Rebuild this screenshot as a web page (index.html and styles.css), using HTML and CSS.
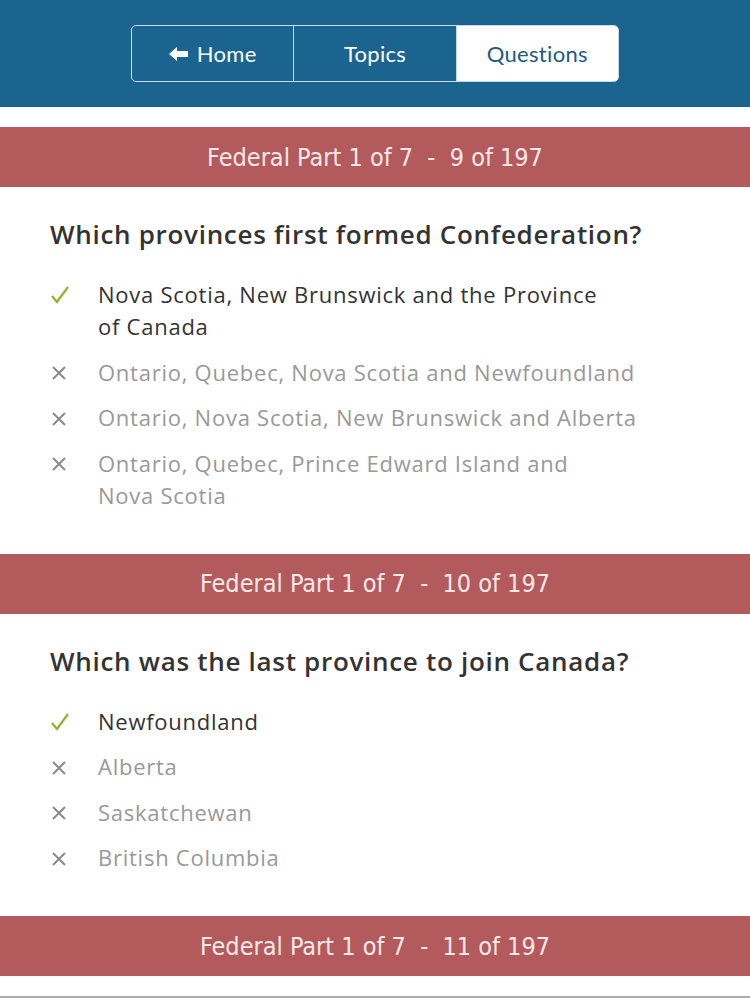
FILE: index.html
```html
<!DOCTYPE html>
<html>
<head>
<meta charset="utf-8">
<link rel="stylesheet" href="styles.css">
</head>
<body>
<header class="topbar">
  <nav class="seg">
    <a class="seg-item"><svg class="arrow" width="20" height="16" viewBox="0 0 20 16"><path d="M0 8 L8 1 L8 5 L19 5 L19 11 L8 11 L8 15 Z" fill="#fff"/></svg>Home</a>
    <a class="seg-item">Topics</a>
    <a class="seg-item active">Questions</a>
  </nav>
</header>
<main>
  <div class="bar">Federal Part 1 of 7  -  9 of 197</div>
  <section class="q">
    <h2 class="q-title">Which provinces first formed Confederation?</h2>
    <ul class="answers">
      <li class="ans right"><span class="ic"><svg width="20" height="20" viewBox="0 0 20 20"><path d="M2 11 L7 17 L18 2" fill="none" stroke="#8db42a" stroke-width="2.2"/></svg></span><span class="txt">Nova Scotia, New Brunswick and the Province<br>of Canada</span></li>
      <li class="ans"><span class="ic"><svg width="14" height="14" viewBox="0 0 14 14"><path d="M1 1 L13 13 M13 1 L1 13" stroke="#8a8a8a" stroke-width="2"/></svg></span><span class="txt">Ontario, Quebec, Nova Scotia and Newfoundland</span></li>
      <li class="ans"><span class="ic"><svg width="14" height="14" viewBox="0 0 14 14"><path d="M1 1 L13 13 M13 1 L1 13" stroke="#8a8a8a" stroke-width="2"/></svg></span><span class="txt">Ontario, Nova Scotia, New Brunswick and Alberta</span></li>
      <li class="ans"><span class="ic"><svg width="14" height="14" viewBox="0 0 14 14"><path d="M1 1 L13 13 M13 1 L1 13" stroke="#8a8a8a" stroke-width="2"/></svg></span><span class="txt">Ontario, Quebec, Prince Edward Island and<br>Nova Scotia</span></li>
    </ul>
  </section>
  <div class="bar">Federal Part 1 of 7  -  10 of 197</div>
  <section class="q">
    <h2 class="q-title">Which was the last province to join Canada?</h2>
    <ul class="answers">
      <li class="ans right"><span class="ic"><svg width="20" height="20" viewBox="0 0 20 20"><path d="M2 11 L7 17 L18 2" fill="none" stroke="#8db42a" stroke-width="2.2"/></svg></span><span class="txt">Newfoundland</span></li>
      <li class="ans"><span class="ic"><svg width="14" height="14" viewBox="0 0 14 14"><path d="M1 1 L13 13 M13 1 L1 13" stroke="#8a8a8a" stroke-width="2"/></svg></span><span class="txt">Alberta</span></li>
      <li class="ans"><span class="ic"><svg width="14" height="14" viewBox="0 0 14 14"><path d="M1 1 L13 13 M13 1 L1 13" stroke="#8a8a8a" stroke-width="2"/></svg></span><span class="txt">Saskatchewan</span></li>
      <li class="ans"><span class="ic"><svg width="14" height="14" viewBox="0 0 14 14"><path d="M1 1 L13 13 M13 1 L1 13" stroke="#8a8a8a" stroke-width="2"/></svg></span><span class="txt">British Columbia</span></li>
    </ul>
  </section>
  <div class="bar">Federal Part 1 of 7  -  11 of 197</div>
  <div class="foot"></div>
</main>
</body>
</html>
```
FILE: styles.css
```css
* { box-sizing: border-box; }
html, body { margin: 0; padding: 0; background: #fff; }
body { font-family: "Open Sans", "Noto Sans", sans-serif; }
.topbar {
  background: #1b6490;
  height: 107px;
  padding-top: 25px;
  display: flex;
  justify-content: center;
}
.seg {
  display: flex;
  width: 488px;
  height: 57px;
  border: 1px solid #c6d9e6;
  border-radius: 5px;
  overflow: hidden;
}
.seg-item {
  flex: 1;
  display: flex;
  align-items: center;
  justify-content: center;
  gap: 8px;
  color: #fff;
  font-family: "Lato", sans-serif;
  font-size: 22px;
  letter-spacing: 0.3px;
}
.seg-item + .seg-item { border-left: 1px solid #c6d9e6; }
.seg-item.active { background: #fff; color: #1f5b82; }
.arrow { display: block; }
main { padding-top: 20px; }
.bar {
  background: #b35a5c;
  height: 60px;
  display: flex;
  align-items: center;
  justify-content: center;
  color: #f8e9e9;
  font-family: "DejaVu Sans Condensed", "DejaVu Sans", sans-serif;
  font-stretch: condensed;
  font-size: 25px;
  white-space: pre;
}
.q { padding: 30px 50px 43px 50px; }
.q-title {
  margin: 0 0 27px 0;
  font-size: 26px;
  line-height: 34px;
  font-weight: 600;
  color: #333;
  letter-spacing: 0.7px;
}
.answers { list-style: none; margin: 0; padding: 0; display: flex; flex-direction: column; gap: 13.5px; }
.ans { display: flex; font-size: 22px; line-height: 32px; color: #999; letter-spacing: 0.75px; }
.ans.right { color: #333; font-weight: 500; }
.ic { width: 48px; flex: none; display: flex; align-items: center; height: 32px; padding-left: 2px; padding-top: 3px; }
.ans.right .ic { padding-left: 0; padding-top: 2px; }
.txt { display: block; }
.foot { height: 22px; border-bottom: 2px solid #aaa; }
```
